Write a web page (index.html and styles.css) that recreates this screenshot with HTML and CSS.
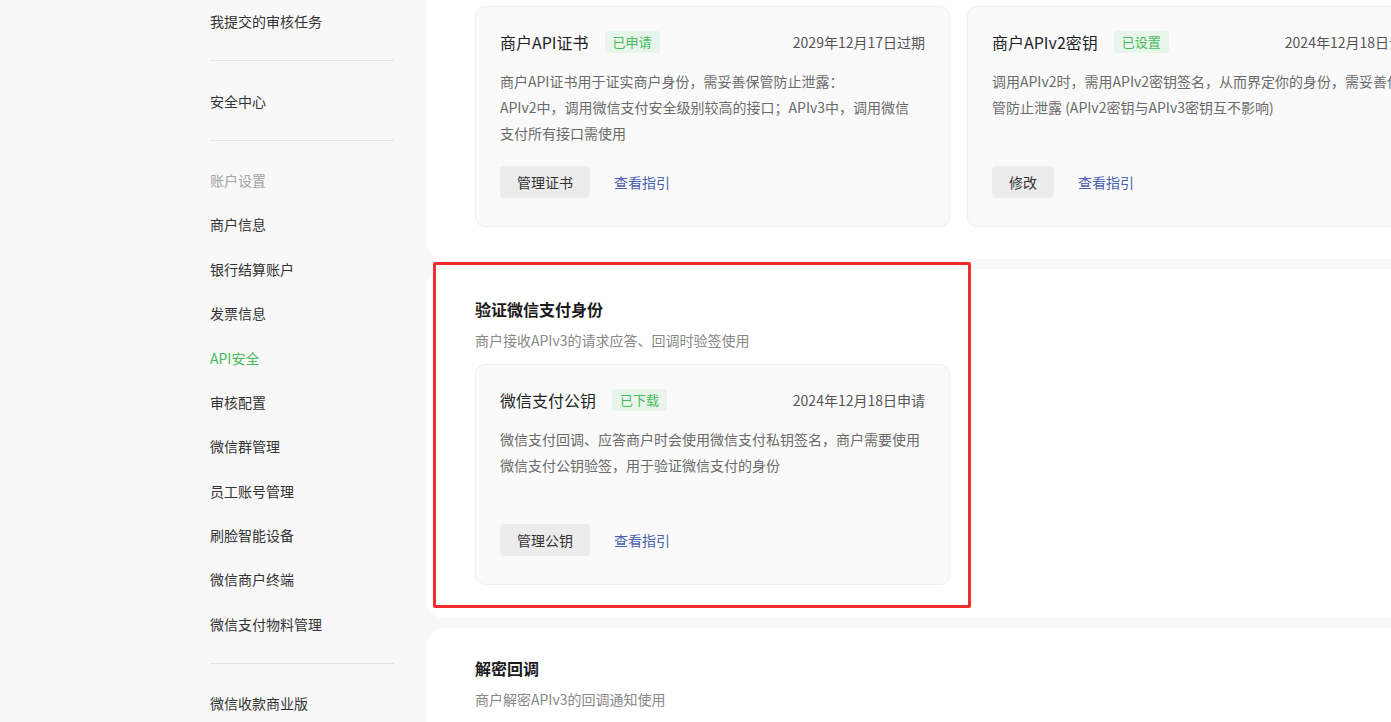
FILE: index.html
```html
<!DOCTYPE html>
<html lang="zh-CN">
<head>
    <meta charset="UTF-8">
    <meta name="viewport" content="width=device-width, initial-scale=1.0">
    <title>API安全</title>
    <link rel="stylesheet" href="styles.css">
</head>
<body>
    <nav class="sidebar">
        <a href="#" class="nav-item">我提交的审核任务</a>
        <div class="nav-divider"></div>
        <a href="#" class="nav-item">安全中心</a>
        <div class="nav-divider"></div>
        <div class="nav-item nav-group">账户设置</div>
        <a href="#" class="nav-item">商户信息</a>
        <a href="#" class="nav-item">银行结算账户</a>
        <a href="#" class="nav-item">发票信息</a>
        <a href="#" class="nav-item active">API安全</a>
        <a href="#" class="nav-item">审核配置</a>
        <a href="#" class="nav-item">微信群管理</a>
        <a href="#" class="nav-item">员工账号管理</a>
        <a href="#" class="nav-item">刷脸智能设备</a>
        <a href="#" class="nav-item">微信商户终端</a>
        <a href="#" class="nav-item">微信支付物料管理</a>
        <div class="nav-divider"></div>
        <a href="#" class="nav-item">微信收款商业版</a>
    </nav>

    <main class="main-content">
        <section class="panel panel-cut">
            <div class="card-row">
                <div class="key-card">
                    <div class="card-head">
                        <span class="card-title">商户API证书</span>
                        <span class="badge">已申请</span>
                        <span class="card-date">2029年12月17日过期</span>
                    </div>
                    <p class="card-desc">商户API证书用于证实商户身份，需妥善保管防止泄露：<br>APIv2中，调用微信支付安全级别较高的接口；APIv3中，调用微信<br>支付所有接口需使用</p>
                    <div class="card-actions">
                        <button class="btn">管理证书</button>
                        <a href="#" class="guide-link">查看指引</a>
                    </div>
                </div>
                <div class="key-card">
                    <div class="card-head">
                        <span class="card-title">商户APIv2密钥</span>
                        <span class="badge">已设置</span>
                        <span class="card-date">2024年12月18日设置</span>
                    </div>
                    <p class="card-desc">调用APIv2时，需用APIv2密钥签名，从而界定你的身份，需妥善保<br>管防止泄露 (APIv2密钥与APIv3密钥互不影响)</p>
                    <div class="card-actions">
                        <button class="btn">修改</button>
                        <a href="#" class="guide-link">查看指引</a>
                    </div>
                </div>
            </div>
        </section>

        <section class="panel">
            <div class="mark-box"></div>
            <h2 class="panel-title">验证微信支付身份</h2>
            <p class="panel-sub">商户接收APIv3的请求应答、回调时验签使用</p>
            <div class="card-row">
                <div class="key-card">
                    <div class="card-head">
                        <span class="card-title">微信支付公钥</span>
                        <span class="badge">已下载</span>
                        <span class="card-date">2024年12月18日申请</span>
                    </div>
                    <p class="card-desc">微信支付回调、应答商户时会使用微信支付私钥签名，商户需要使用<br>微信支付公钥验签，用于验证微信支付的身份</p>
                    <div class="card-actions">
                        <button class="btn">管理公钥</button>
                        <a href="#" class="guide-link">查看指引</a>
                    </div>
                </div>
            </div>
        </section>

        <section class="panel panel-last">
            <h2 class="panel-title">解密回调</h2>
            <p class="panel-sub">商户解密APIv3的回调通知使用</p>
        </section>
    </main>
</body>
</html>
```

FILE: styles.css
```css
:root {
    --bg-color: #f8f8f8;
    --text-color: #333333;
    --green: #47bb5b;
    --link-color: #4a5fb0;
}

* {
    margin: 0;
    padding: 0;
    box-sizing: border-box;
}

html, body {
    height: 100%;
    overflow: hidden;
}

body {
    font-family: "Noto Sans CJK SC", "Microsoft YaHei", sans-serif;
    background-color: var(--bg-color);
    color: var(--text-color);
    display: flex;
    align-items: flex-start;
}

.sidebar {
    flex: none;
    width: 427px;
    margin-top: -1px;
    padding: 0 33px 0 210px;
    display: flex;
    flex-direction: column;
}

.nav-item {
    height: 44.4px;
    display: flex;
    align-items: center;
    font-size: 14px;
    color: #333;
    text-decoration: none;
}

.nav-item.nav-group {
    color: #a3a3a3;
}

.nav-item.active {
    color: var(--green);
}

.nav-divider {
    height: 1px;
    background-color: #e3e3e3;
    margin: 17px 0;
}

.main-content {
    flex: none;
    width: 1063px;
    display: flex;
    flex-direction: column;
    gap: 10px;
}

.panel {
    position: relative;
    background-color: #ffffff;
    border-radius: 16px;
    padding: 28px 48px 33px;
}

.panel-cut {
    border-radius: 0 0 16px 16px;
    padding-top: 6px;
    padding-bottom: 32px;
}

.panel-last {
    min-height: 200px;
}

.panel-title {
    font-size: 16px;
    font-weight: 700;
    line-height: 24px;
    color: #1a1a1a;
}

.panel-sub {
    margin-top: 9px;
    font-size: 14px;
    line-height: 20px;
    color: #888;
}

.panel-sub + .card-row {
    margin-top: 14px;
}

.card-row {
    display: flex;
    gap: 17px;
}

.key-card {
    flex: none;
    width: 475px;
    height: 221px;
    background-color: #fafafa;
    border: 1px solid #efefef;
    border-radius: 10px;
    padding: 24px 24px 28px;
    display: flex;
    flex-direction: column;
    overflow: hidden;
}

.card-head {
    display: flex;
    align-items: center;
    height: 22px;
}

.card-title {
    font-size: 16px;
    color: #1f1f1f;
    white-space: nowrap;
}

.badge {
    margin-left: 16px;
    height: 22px;
    line-height: 22px;
    padding: 0 8px;
    border-radius: 3px;
    background-color: #e7f5ea;
    color: var(--green);
    font-size: 13px;
    white-space: nowrap;
}

.card-date {
    margin-left: auto;
    font-size: 14px;
    color: #555;
    white-space: nowrap;
}

.card-desc {
    margin-top: 15px;
    font-size: 14px;
    line-height: 26px;
    color: #6a6a6a;
    white-space: nowrap;
}

.card-actions {
    margin-top: auto;
    display: flex;
    align-items: center;
    gap: 24px;
}

.btn {
    height: 32px;
    padding: 0 17px;
    border: none;
    border-radius: 4px;
    background-color: #ececec;
    color: #333;
    font-family: inherit;
    font-size: 14px;
    cursor: pointer;
}

.guide-link {
    font-size: 14px;
    color: var(--link-color);
    text-decoration: none;
}

/* annotation box drawn over the second section */
.mark-box {
    position: absolute;
    left: 6px;
    top: -7px;
    width: 538px;
    height: 346px;
    border: 3px solid #f52a2a;
    border-radius: 2px;
    pointer-events: none;
}
```
